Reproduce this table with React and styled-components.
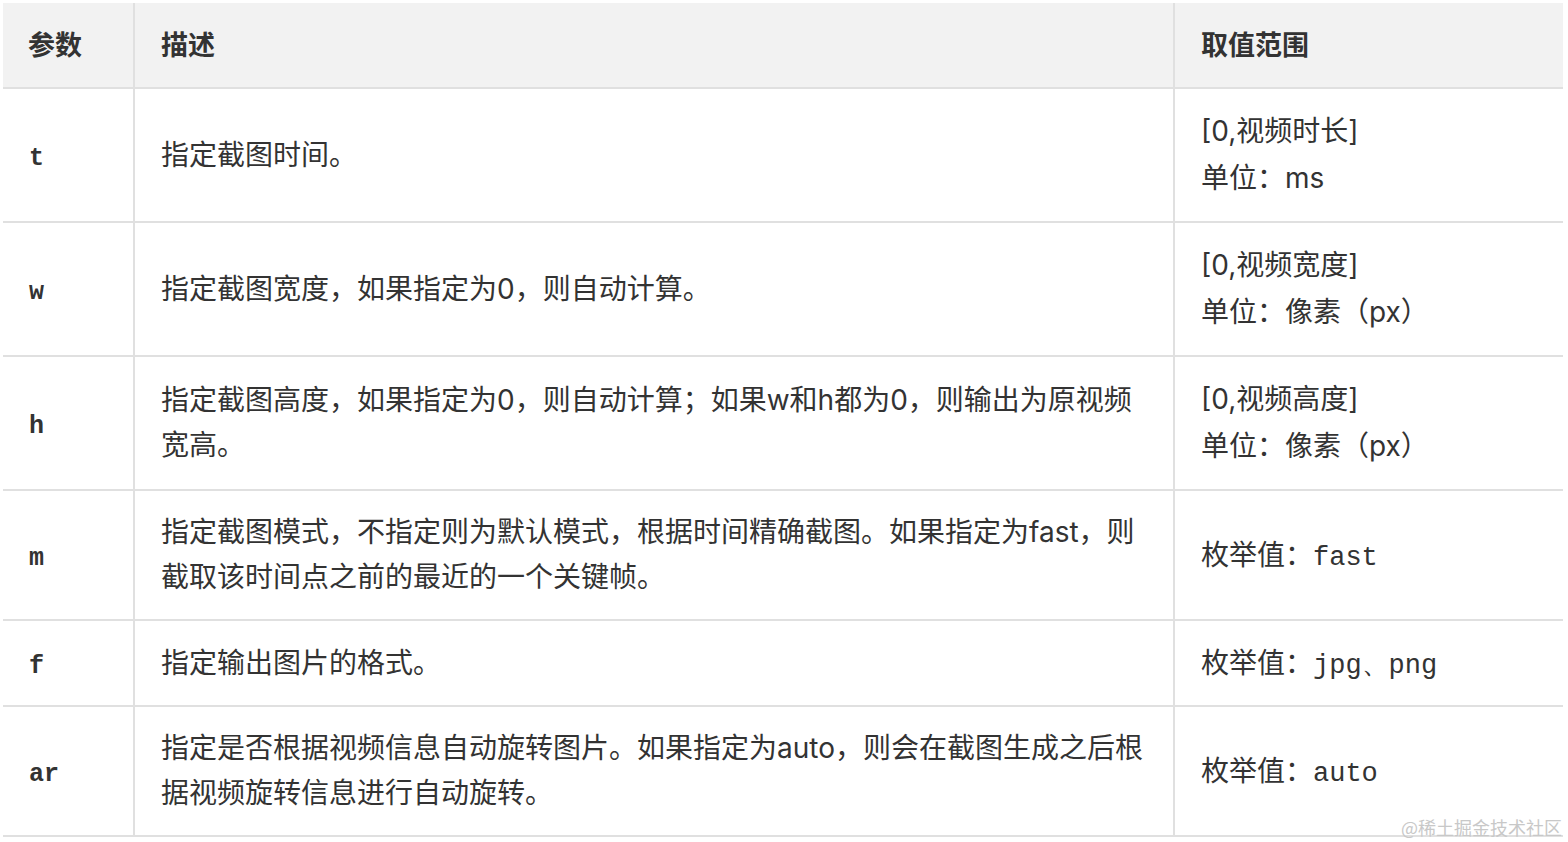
import React from 'react';
import styled, { createGlobalStyle } from 'styled-components';

const GlobalStyle = createGlobalStyle`
  html, body {
    margin: 0;
    padding: 0;
    background: #fff;
  }
`;

const Page = styled.div`
  position: relative;
  width: 1568px;
  height: 842px;
  padding: 3px 5px 0 3px;
  box-sizing: border-box;
  font-family: Inter, "Noto Sans CJK SC", sans-serif;
  color: #333;
  overflow: hidden;
`;

const Table = styled.table`
  width: 1560px;
  border-collapse: collapse;
  table-layout: fixed;
  font-size: 28px;
  line-height: 45px;
`;

const HeadRow = styled.tr`
  background: #f2f2f2;
`;

const HeadCell = styled.th`
  text-align: left;
  font-weight: 700;
  font-size: 27px;
  height: 85px;
  padding: 0 0 0 26px;
  box-sizing: border-box;
  border-bottom: 2px solid #e0e0e0;
  border-left: ${(p) => (p.$first ? 'none' : '2px solid #e0e0e0')};
  padding-left: ${(p) => (p.$first ? '25px' : '26px')};
`;

const Cell = styled.td`
  padding: 19px 20px 19px 26px;
  border-bottom: 2px solid #e0e0e0;
  border-left: ${(p) => (p.$first ? 'none' : '2px solid #e0e0e0')};
  vertical-align: middle;
  white-space: nowrap;
  line-height: ${(p) => p.$lh || 45}px;
`;

const Param = styled.code`
  font-family: "Liberation Mono", "DejaVu Sans Mono", monospace;
  font-weight: 700;
  font-size: 25px;
  line-height: 1;
  color: #333;
`;

const Code = styled.code`
  font-family: "Liberation Mono", "DejaVu Sans Mono", monospace;
  font-size: 27px;
  line-height: 1;
  color: #333;
`;

const Watermark = styled.div`
  position: absolute;
  right: 6px;
  bottom: 4px;
  font-size: 18px;
  line-height: 22px;
  color: #c8c8c8;
  font-family: "Noto Sans CJK SC", sans-serif;
`;

const rows = [
  {
    name: 't',
    desc: ['指定截图时间。'],
    range: [['[0,视频时长]'], ['单位：ms']],
    lh: 47,
  },
  {
    name: 'w',
    desc: ['指定截图宽度，如果指定为0，则自动计算。'],
    range: [['[0,视频宽度]'], ['单位：像素（px）']],
    lh: 47,
  },
  {
    name: 'h',
    desc: ['指定截图高度，如果指定为0，则自动计算；如果w和h都为0，则输出为原视频', '宽高。'],
    range: [['[0,视频高度]'], ['单位：像素（px）']],
    lh: 47,
  },
  {
    name: 'm',
    desc: ['指定截图模式，不指定则为默认模式，根据时间精确截图。如果指定为fast，则', '截取该时间点之前的最近的一个关键帧。'],
    range: [['枚举值：', 'fast']],
  },
  {
    name: 'f',
    desc: ['指定输出图片的格式。'],
    range: [['枚举值：', 'jpg、png']],
    lh: 46,
  },
  {
    name: 'ar',
    desc: ['指定是否根据视频信息自动旋转图片。如果指定为auto，则会在截图生成之后根', '据视频旋转信息进行自动旋转。'],
    range: [['枚举值：', 'auto']],
  },
];

function Lines({ items }) {
  return items.map((line, i) => (
    <React.Fragment key={i}>
      {i > 0 && <br />}
      {line}
    </React.Fragment>
  ));
}

export default function App() {
  return (
    <Page>
      <GlobalStyle />
      <Table>
        <colgroup>
          <col style={{ width: 131 }} />
          <col style={{ width: 1040 }} />
          <col style={{ width: 389 }} />
        </colgroup>
        <thead>
          <HeadRow>
            <HeadCell $first>参数</HeadCell>
            <HeadCell>描述</HeadCell>
            <HeadCell>取值范围</HeadCell>
          </HeadRow>
        </thead>
        <tbody>
          {rows.map((row) => (
            <tr key={row.name}>
              <Cell $first>
                <Param>{row.name}</Param>
              </Cell>
              <Cell>
                <Lines items={row.desc} />
              </Cell>
              <Cell $lh={row.lh}>
                {row.range.map((part, i) => (
                  <React.Fragment key={i}>
                    {i > 0 && <br />}
                    {part[0]}
                    {part[1] && <Code>{part[1]}</Code>}
                  </React.Fragment>
                ))}
              </Cell>
            </tr>
          ))}
        </tbody>
      </Table>
      <Watermark>@稀土掘金技术社区</Watermark>
    </Page>
  );
}
